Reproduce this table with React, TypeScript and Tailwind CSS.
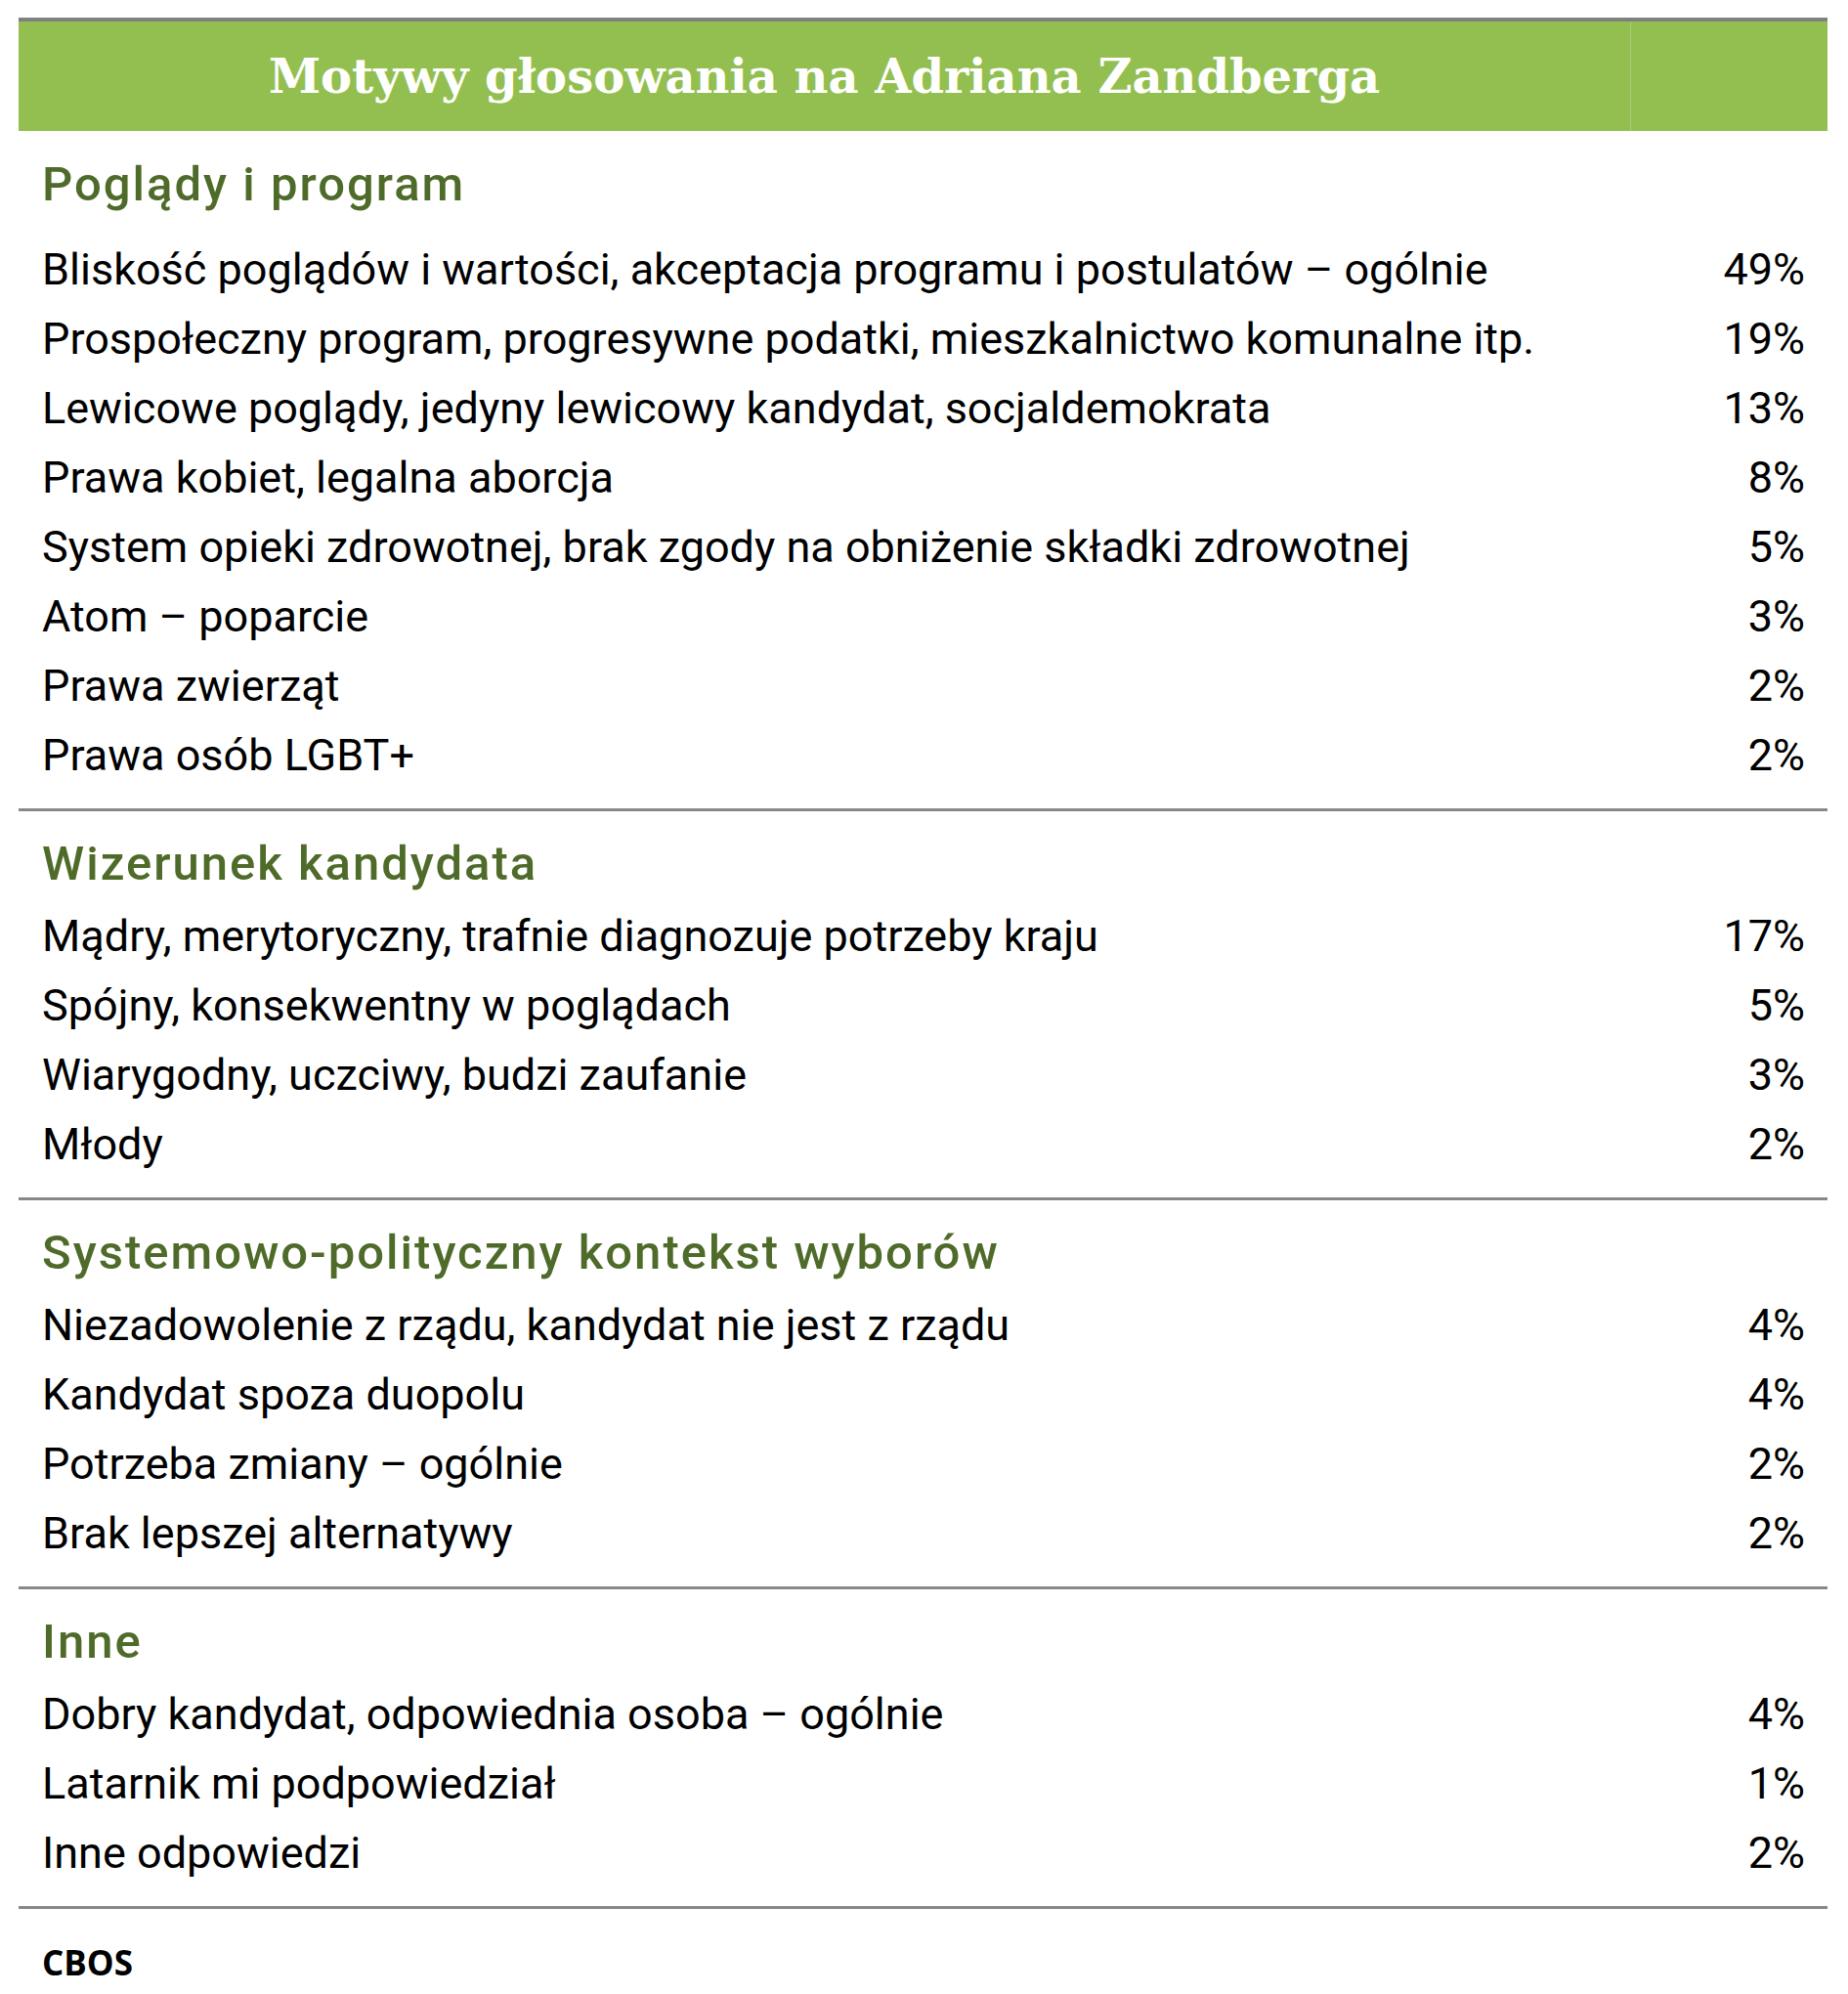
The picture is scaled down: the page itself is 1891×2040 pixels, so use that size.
const sections = [
  {
    title: 'Poglądy i program',
    first: true,
    rows: [
      ['Bliskość poglądów i wartości, akceptacja programu i postulatów – ogólnie', '49%'],
      ['Prospołeczny program, progresywne podatki, mieszkalnictwo komunalne itp.', '19%'],
      ['Lewicowe poglądy, jedyny lewicowy kandydat, socjaldemokrata', '13%'],
      ['Prawa kobiet, legalna aborcja', '8%'],
      ['System opieki zdrowotnej, brak zgody na obniżenie składki zdrowotnej', '5%'],
      ['Atom – poparcie', '3%'],
      ['Prawa zwierząt', '2%'],
      ['Prawa osób LGBT+', '2%'],
    ],
  },
  {
    title: 'Wizerunek kandydata',
    rows: [
      ['Mądry, merytoryczny, trafnie diagnozuje potrzeby kraju', '17%'],
      ['Spójny, konsekwentny w poglądach', '5%'],
      ['Wiarygodny, uczciwy, budzi zaufanie', '3%'],
      ['Młody', '2%'],
    ],
  },
  {
    title: 'Systemowo-polityczny kontekst wyborów',
    rows: [
      ['Niezadowolenie z rządu, kandydat nie jest z rządu', '4%'],
      ['Kandydat spoza duopolu', '4%'],
      ['Potrzeba zmiany – ogólnie', '2%'],
      ['Brak lepszej alternatywy', '2%'],
    ],
  },
  {
    title: 'Inne',
    rows: [
      ['Dobry kandydat, odpowiednia osoba – ogólnie', '4%'],
      ['Latarnik mi podpowiedział', '1%'],
      ['Inne odpowiedzi', '2%'],
    ],
  },
];

export default function App() {
  return (
    <div className="bg-white w-[1891px] h-[2040px] pt-[18px] pl-[19px] font-['Roboto',sans-serif]">
      <div className="w-[1851px]">
        {/* Header */}
        <div className="flex h-[116px] border-t-4 border-[#808080] bg-[#93bf50]">
          <div className="w-[1649px] flex items-center justify-center">
            <h1 className="text-white font-bold text-[48px] leading-none font-['DejaVu_Serif',serif]">
              Motywy głosowania na Adriana Zandberga
            </h1>
          </div>
          <div className="flex-1 border-l border-[#a9cd78]" />
        </div>

        {sections.map((s) => (
          <div key={s.title} className={`${s.first ? 'pt-[27px]' : 'pt-[26px]'} border-b-[3px] border-[#888888]`}>
            <h2 className="h-[56px] leading-[56px] pl-[24px] text-[49px] font-medium tracking-[2px] text-[#4f6b2a]">
              {s.title}
            </h2>
            <div className={`${s.first ? 'mt-[23px]' : 'mt-[10px]'} pb-[19px]`}>
              {s.rows.map(([label, value]) => (
                <div key={label} className="flex justify-between h-[71px] leading-[71px] pl-[24px] pr-[23px] text-[45px] text-black">
                  <span>{label}</span>
                  <span>{value}</span>
                </div>
              ))}
            </div>
          </div>
        ))}

        <div className="mt-[35px] pl-[24px] h-[40px] leading-[40px] text-[35px] font-bold text-black font-['Open_Sans',sans-serif]">
          CBOS
        </div>
      </div>
    </div>
  );
}
